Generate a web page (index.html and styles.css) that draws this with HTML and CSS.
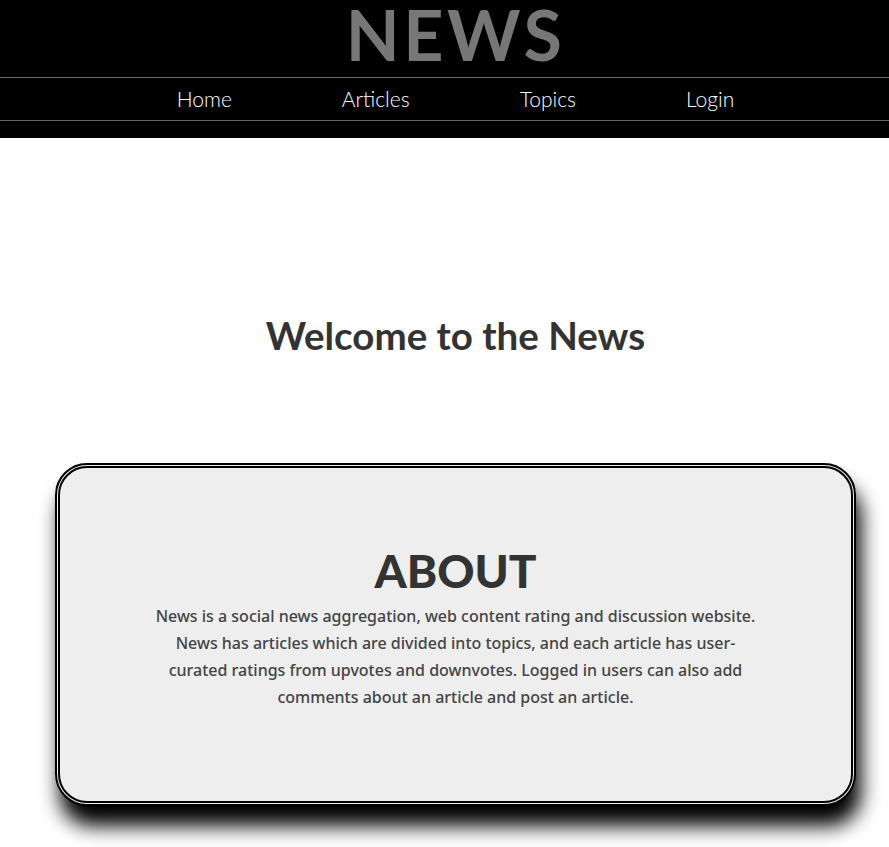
FILE: index.html
```html
<!DOCTYPE html>
<html lang="en">
<head>
<meta charset="utf-8">
<title>News</title>
<link rel="stylesheet" href="styles.css">
</head>
<body>
<header class="site-header">
  <h1 class="brand">NEWS</h1>
  <nav class="nav">
    <ul class="nav-list">
      <li><a href="#">Home</a></li>
      <li><a href="#">Articles</a></li>
      <li><a href="#">Topics</a></li>
      <li><a href="#">Login</a></li>
    </ul>
  </nav>
</header>
<main class="main">
  <h2 class="welcome">Welcome to the News</h2>
  <section class="card">
    <h3 class="card-title">ABOUT</h3>
    <p class="card-text">News is a social news aggregation, web content rating and discussion website. News has articles which are divided into topics, and each article has user-curated ratings from upvotes and downvotes. Logged in users can also add comments about an article and post an article.</p>
  </section>
</main>
</body>
</html>
```
FILE: styles.css
```css
html, body {
  margin: 0;
  padding: 0;
  background: #fff;
}
body {
  font-family: Lato, "Noto Sans", sans-serif;
}
.site-header {
  background: #000;
  height: 138px;
  padding-left: 22px;
  box-sizing: border-box;
}
.brand {
  margin: 0;
  height: 77px;
  text-align: center;
  font-family: Lato, sans-serif;
  font-weight: 700;
  font-size: 70px;
  line-height: 68px;
  color: #777;
  letter-spacing: 3.5px;
}
.nav {
  border-top: 1px solid #666;
  border-bottom: 1px solid #666;
  margin-left: -22px;
  padding-left: 22px;
}
.nav-list {
  list-style: none;
  margin: 0;
  padding: 0;
  height: 42px;
  display: flex;
  justify-content: center;
  align-items: center;
  gap: 110px;
}
.nav-list a {
  color: #fff;
  text-decoration: none;
  font-family: Lato, sans-serif;
  font-weight: 300;
  font-size: 21px;
  position: relative;
  top: -1px;
}
.main {
  padding: 0 33px 60px 55px;
}
.welcome {
  margin: 0;
  padding-top: 174px;
  height: 325px;
  box-sizing: border-box;
  text-align: center;
  font-family: Lato, sans-serif;
  font-weight: 700;
  font-size: 38.5px;
  color: #333;
  line-height: 46px;
}
.card {
  border: 5px double #000;
  border-radius: 32px;
  background: #eee;
  box-shadow: 5px 20px 20px #000;
  height: 343px;
  box-sizing: border-box;
  padding: 73px 90px 0;
  text-align: center;
}
.card-title {
  margin: 0;
  font-family: Lato, sans-serif;
  font-weight: 900;
  font-size: 46px;
  line-height: 60px;
  color: #333;
}
.card-text {
  margin: 2px auto 0;
  max-width: 612px;
  font-family: "Noto Sans", sans-serif;
  font-weight: 500;
  font-size: 16px;
  line-height: 27px;
  color: #444;
}
```
